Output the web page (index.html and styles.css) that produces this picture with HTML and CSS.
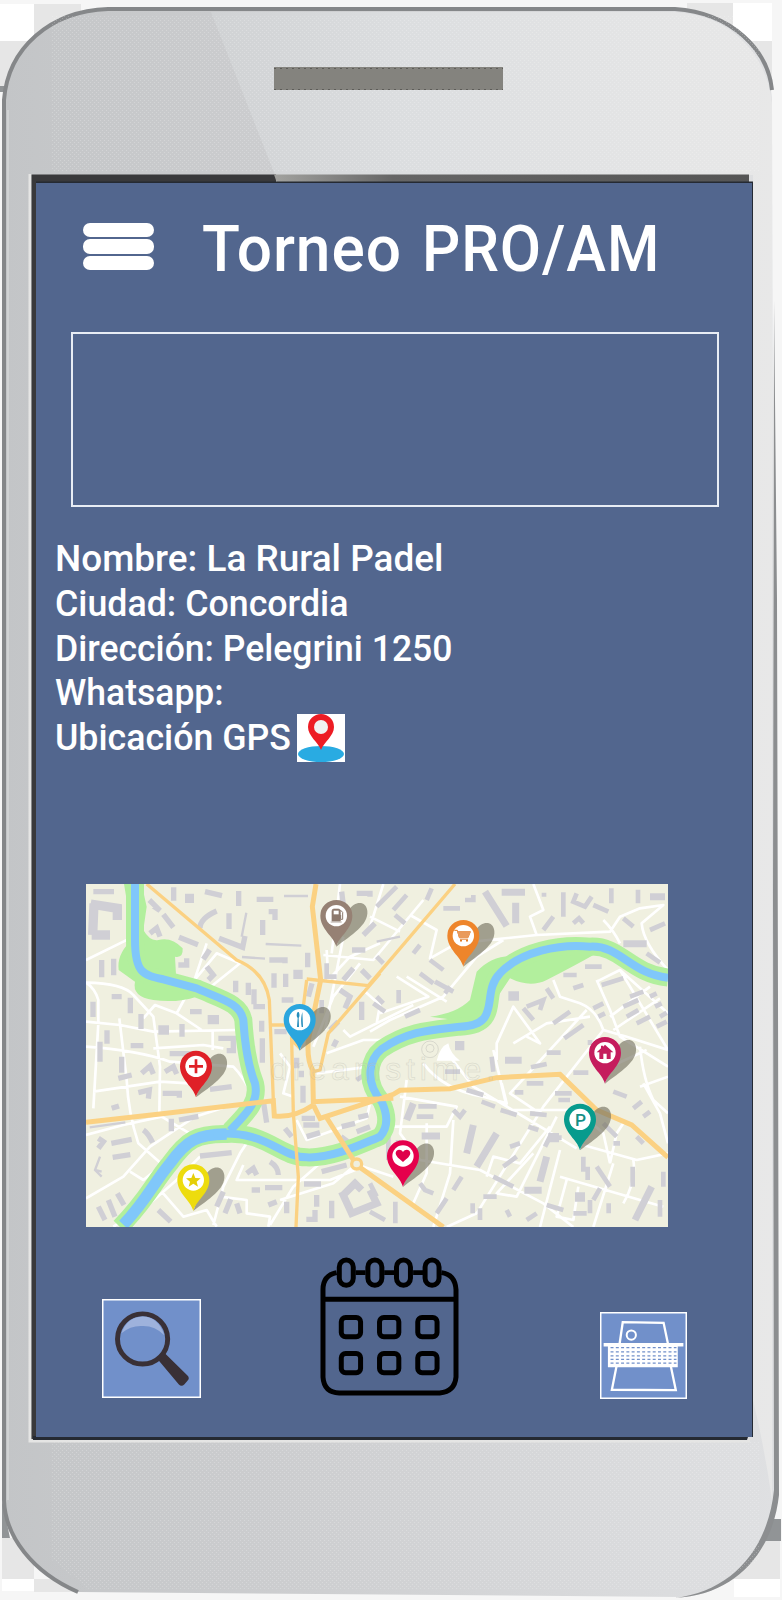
FILE: index.html
```html
<!DOCTYPE html>
<html lang="es">
<head>
<meta charset="utf-8">
<title>Torneo PRO/AM</title>
<link rel="stylesheet" href="styles.css">
</head>
<body>
<div class="phone">
<svg class="phone-shell" viewBox="0 0 782 1600" aria-hidden="true">
<defs>
<linearGradient id="body"><stop offset="0" stop-color="#c3c5c7"/><stop offset=".35" stop-color="#cccdcf"/><stop offset=".65" stop-color="#d5d6d8"/><stop offset="1" stop-color="#dfe0e2"/></linearGradient>
<linearGradient id="shine"><stop offset="0" stop-color="#d0d2d4"/><stop offset=".35" stop-color="#dcdee0"/><stop offset="1" stop-color="#e8e8e8"/></linearGradient>
<linearGradient id="edge"><stop offset="0" stop-color="#a2a29f"/><stop offset=".25" stop-color="#666"/><stop offset="1" stop-color="#555"/></linearGradient>
<pattern id="grain" width="4" height="4" patternUnits="userSpaceOnUse"><path d="M0 0h1v1H0zM2 2h1v1H2z" fill="#fff" opacity=".22"/></pattern>
</defs>
<path fill="#f6f6f6" d="M0 0H782V1600H0z"/>
<path fill="#e6e6e6" d="M34 4h47v37H34zM0 41h34v47H0zM687 3h46v38H687zM733 41h39v47H733zM2 1538h32v41H2zM34 1579h47v13H34zM733 1538h47v41H733z"/>
<path fill="#fff" d="M0 4h34v37H0zM733 3h39v38H733zM2 1579h32v12H2zM734 1579h46v18H734z"/>
<path fill="#919496" d="M0 86h4v6H0zM2 1500l8 38H2zM781 1519h-12l-7 22h19z"/>
<path d="M4 100C8 48 50 11 108 9H675C735 13 770 55 772 100L775 1490C770 1550 735 1595 680 1597L78 1592C32 1572 5 1536 4 1500Z" fill="url(#body)"/>
<path d="M211 12H675C733 15 768 57 772 104V1500Q765 1450 753 1400V175H275Z" fill="url(#shine)"/>
<path d="M78 1592C32 1572 5 1536 4 1500V100C8 48 50 11 108 9H675C732 13 768 50 772 90" fill="none" stroke="#858789" stroke-width="4"/>
<path d="M774 300L777 600 778 1000 779 1495C773 1550 738 1595 675 1598 733 1591 768 1548 774 1490L773 900Z" fill="#8c8e90"/>
<path d="M52 15H760V172H52zM52 1442H760V1560L700 1590H90L52 1560z" fill="url(#grain)"/>
<path d="M8 110V1500" stroke="#d6d7d8" stroke-width="1.5"/>
<path d="M274 67H503V90H274z" fill="#84837e"/>
<path d="M274 68.500H503M274 89.500H503" stroke="#5e5d59" stroke-dasharray="2 4"/>
<path d="M30 174V1441H750" fill="none" stroke="#e5e5e4" stroke-width="3"/>
<path d="M31.500 174.500H276V183H36V1439H31.500z" fill="#39393b"/>
<path d="M274 174.500H749V183H277z" fill="url(#edge)"/>
<path d="M36 181.500H753V1437H748L747 1440H33V1436H36z" fill="#252a33"/>
</svg>
<main class="screen">
<header class="header">
<div class="menu"><i></i><i></i><i></i></div>
<h1><span class="word-a">Torneo</span> <span class="word-b">PRO/AM</span></h1>
</header>
<div class="banner"></div>
<section class="info">
<p class="l1">Nombre: La Rural Padel</p>
<p class="l2">Ciudad: Concordia</p>
<p class="l3">Dirección: Pelegrini 1250</p>
<p class="l4">Whatsapp:</p>
<div class="gps"><p class="l5">Ubicación GPS</p>
<svg width="48" height="48" viewBox="0 0 48 48"><path fill="#fff" d="M0 0H48V48H0z"/><ellipse cx="24" cy="40" rx="23" ry="8" fill="#29abe2"/><path d="M24 36C21 28 11 22 11 13A13 13 0 0 1 37 13C37 22 27 28 24 36Z" fill="#ed1c24"/><circle cx="24" cy="13" r="7" fill="#f1f1f1"/></svg></div>
</section>
<svg class="map" viewBox="18 12 1746 1029">
<defs>
<path id="drop" d="M0 140C-8 108-48 88-48 47A48 47 0 0 1 48 47C48 88 8 108 0 140Z"/>
<path id="shade" d="M0 140L38 30C55 2 90 2 93 33C97 75 45 105 0 140Z" fill="#777363" opacity=".65"/>
</defs>
<path fill="#f0f0e0" d="M18 12H1764V1041H18z"/>
<g fill="none" stroke="#fff" stroke-width="8" stroke-linejoin="round">
<path d="M18 240L150 175M18 308Q45 325 55 360V430L40 685M18 308Q130 310 160 345L220 410L240 560L238 705M18 425L120 435L220 455L470 450M18 500Q170 510 270 545L460 560Q490 590 525 660M118 415L140 600Q145 700 175 790L265 870M40 635L240 605 330 610M190 415L225 375 290 400 320 345M290 400L365 450M398 455V510M220 505L370 495L430 505M340 310L380 190M335 310L410 220L480 250 430 290 380 330M18 765L130 735L245 710L345 770M18 955L130 890 210 800 345 710 440 680M100 1040L210 970 290 900 360 830M150 875L190 900 240 860M245 935L310 1010 380 990 410 1040M400 1035L430 920 480 820 500 790M420 950L500 960 500 1000 570 1010 565 1040M490 855L470 900H750L850 860 940 890M600 960L760 910 820 860M570 1035L640 920 720 850M650 720L680 780 860 715 870 670M600 520L630 560 610 640 640 650M710 580L870 560M740 520L850 480H905L870 540M730 225L880 240 1030 60M740 210L745 300 810 230 900 190M780 12L755 220M790 170L735 450M700 500L760 350 840 250M790 450L810 470 1000 375M850 330L900 375 890 430"/>
<path d="M870 140L910 12M870 110L960 155M990 105L1070 150 1050 235 1130 190M1130 190Q1230 180 1370 165L1350 110 1390 90 1360 12M1370 165L1590 155 1620 110 1680 85 1750 75 1685 130Q1690 190 1764 270M1570 120Q1600 150 1620 190M870 455L930 420 1090 350 1190 230 1270 180M950 290L1045 350 900 400M980 290L1100 365M1250 540V490L1300 380 1380 490 1340 470M1300 490L1400 430 1530 410M1420 300L1440 350 1500 370Q1550 390 1570 450L1640 470 1764 510M1550 300L1590 390 1620 470 1764 560M1550 305L1620 270 1764 400M1620 270L1764 510M1710 320L1590 410M1740 355L1600 450M1690 610L1740 700 1764 790M1520 390L1290 640 1380 700M1570 450L1390 680 1190 1000 1100 1041M1570 570L1700 510M1110 530L1180 620 1490 805M1030 550Q1090 630 1210 650L1280 670 1265 610M1240 510L1280 680M980 600L960 760 1020 840 1200 870 1390 970 1480 1041M960 650L1130 680 1100 740H900M1120 720L1110 880 1060 1041M1040 730V880L1000 970M1300 690H1490L1570 760 1590 850M1410 740L1320 850 1240 830 1220 890M1360 820L1250 940 1310 950 1430 710M1490 790L1670 840 1764 820M1440 810L1380 1041M1440 890L1750 980M1460 900L1430 1010 1480 1020 1495 920M1600 850L1540 1041M1660 840Q1670 900 1630 970M1590 850L1610 760 1630 730M1680 620L1764 590M1680 500Q1690 600 1720 660L1764 700"/>
</g>
<g fill="none" stroke="#d0cfd5" stroke-width="16">
<path d="M40 35H102M281 22V62M476 33V78M375 35L426 47M530 58H580M566 95H585V120M250 103L280 142M208 60L240 92 220 78M360 145Q360 115 410 93M447 100V147M548 120V165M417 175L488 202 495 168M210 160L230 144 240 170M297 172L354 194M370 238L389 209M320 235V255H295M568 240H615V250M65 240V292M101 236V286M683 218V262M380 260L400 285 385 300M467 302V337M505 308V345M582 280V323M617 281V321M522 328V373M60 485V545M39 365V411M95 350H125M151 353V400M183 402V447M81 451V491M306 432V470M330 395H365M415 475H460V512H440M152 497H190M125 530V578M269 521H338M185 580L210 558 220 582M255 575L280 560 290 582M547 475V548M390 628L455 620M115 595L155 585M175 638L208 630 205 656M248 640H298V653M95 685L117 678M297 720L355 709M55 775L70 785 55 805M94 790L155 778M190 750Q205 760 218 788M98 832L151 824M274 716V754M550 663L560 728M360 828L455 818M500 880L520 865 530 885M570 845Q595 860 595 885M515 930H540M555 923H607M672 912H723M620 965V1000M470 970L480 1000M430 935L410 980M452 958L435 1000M55 980L75 1020M85 960L105 1010M112 940L132 975M235 990L272 1025M565 975L590 965M679 1018H705V990M710 945V980M755 962V1015M669 617V668M696 310L685 350M650 533V565M664 572V592M605 360H640M555 380H520M545 422V455M620 455H583M615 745L635 770M665 715H705M670 735H718M680 770L720 758M725 875L800 855M785 740L825 730M783 770L810 790M830 755L870 740M835 712L865 705M795 385L810 350 780 330M750 450L775 425M770 480L760 500M790 300L820 265M816 210H856M850 165L885 130M830 40H870V50M785 35L790 75M780 95L800 110M845 270L870 295M845 365V420"/>
<path stroke-width="7" d="M612 48H684M499 98L485 170M557 192L664 197M486 231L555 236M29 742L136 727M45 870L65 875M60 830L45 870 65 890M890 185L960 170"/>
<path stroke-width="14" d="M740 250V290H770M725 360V400M830 600L860 580M890 80L950 20M940 90L980 45M1040 60L1055 25M945 105L975 130M1090 85H1140M1155 60H1180V45M1450 37V110M1392 38V50M1540 75L1585 95M1535 50L1515 80 1480 65 1490 40M1594 25V70M1674 29V70M1480 130L1497 115 1510 130M1390 150L1420 110M1630 115L1660 140M1710 150L1755 130M1700 220L1740 248M1000 220L1020 195M1050 240L1090 270M1120 335L1065 305M890 230L910 250M890 350L910 370M880 370L915 395M956 330V370M975 410L1020 390M1020 280L1060 310M1095 340L1110 320M1515 260H1565M1450 285H1490M1480 325L1510 315M1400 325L1420 355M1340 380L1390 360 1380 390M1330 385L1360 420M1420 430L1470 395M1453 475L1510 435M1565 315L1630 295M1540 385L1570 370M1555 410L1575 400M1650 350L1690 335M1630 380L1675 360M1640 410L1675 390M1670 430L1710 410M1710 350L1730 340M1725 380L1745 370M1740 410L1760 398M1730 440L1760 425M1530 480V495M1400 518H1435V525M1353 562L1400 552M1235 530L1240 575M1128 497H1152M1095 575H1140M1480 578H1525M1425 640H1475M1340 610H1390M1304 637H1330M1160 630L1210 645M1205 665L1245 680M1262 690L1310 705M1435 660H1470M1350 700L1400 705M1345 740L1375 750M1640 650L1600 635M1660 685L1685 665M1690 710L1710 695M1015 679H1070M1010 710H1060M1120 690L1140 710 1155 690M925 770V840M954 780V820M1145 890L1120 930M1100 955L1070 1000M1020 910L1035 930 1060 940M1240 890L1300 920M1270 860L1310 830M1290 800L1320 790M1395 800L1415 760M1430 773H1445M1510 830V875M1550 860L1590 920M1523 860V900M1658 860V920M1570 730L1610 770M1600 790H1620M1670 770L1690 790M1530 960V1000M1586 970V1000M1560 925L1540 960M1480 1000H1520M1750 875V920M1740 960V1010M1210 950H1250M1200 985V1020M1178 970V1000M1280 990L1290 1010M1340 1020L1370 1000M1400 975L1450 990M946 965V1030M870 910L890 950M870 995L915 1020"/>
<path stroke-width="21" d="M1215 35L1280 138M1265 37H1335M1307 68V130M1710 50H1755M1630 191H1700M1275 541H1325M1000 670L980 720M1180 735L1160 820M1250 760L1190 860M1025 768H1080M1400 830L1380 905M1333 931H1385M1715 920L1665 1020"/>
<path d="M42 70L38 165M32 72L112 85V120M35 165H90M383 419H417M235 450H267M315 55H342M640 283H668M1285 348H1317M1125 497H1153M1405 773H1437M1485 951H1515" stroke-width="28"/>
<path d="M785 950L825 910 845 930M785 935L815 1000 890 970 870 930" stroke-width="22"/>
</g>
<g stroke-linejoin="round">
<path fill="#b2ef9d" d="M132 12H185L200 80 190 150Q210 185 235 180 275 170 308 205 310 235 285 230L288 285 370 315 350 350Q290 370 220 360 155 350 165 305L116 270Q110 225 150 185L145 90Z"/>
<path fill="#b2ef9d" d="M1050 410Q1130 400 1170 360L1190 275Q1240 220 1315 230L1470 200 1550 220Q1470 265 1400 300 1350 325 1290 295L1200 430Z"/>
<path d="M165 12V180C165 280 190 285 250 298L350 325C430 360 480 370 490 420C495 500 505 560 525 610C538 665 500 700 450 752M120 1041C200 960 220 910 270 850C320 780 350 760 440 762C560 755 600 832 680 832C760 835 850 790 900 770Q935 730 905 665C850 600 870 535 905 507C990 450 1060 450 1140 440C1270 435 1200 340 1260 280C1320 215 1440 190 1530 200C1620 195 1650 280 1764 293" fill="none" stroke="#b2ef9d" stroke-width="54"/>
<path d="M165 12V180C165 280 190 285 250 298L350 325C430 360 480 370 490 420C495 500 505 560 525 610C538 665 500 700 450 752" fill="none" stroke="#80c7fa" stroke-width="24"/>
<path d="M130 1034C200 960 220 910 270 850C320 780 350 764 440 762" fill="none" stroke="#80c7fa" stroke-width="34"/>
<path d="M400 762C560 748 600 832 680 832C760 835 850 790 900 770Q935 730 905 665C850 600 870 535 905 507C990 450 1060 450 1140 440C1270 435 1200 340 1260 280C1320 215 1440 190 1530 200C1620 195 1650 280 1764 293" fill="none" stroke="#80c7fa" stroke-width="24"/>
</g>
<g fill="none" stroke="#fbd182" stroke-width="10">
<path d="M200 12L470 240Q555 275 568 360L580 660M575 435H670M680 300L655 500 635 480 640 700 655 890 648 1041M680 297L865 317M900 280L745 460 720 570 700 575M1125 12L865 317"/>
<path stroke-width="15" d="M708 12L697 80 722 300 685 480Q680 540 698 570L700 665 940 655M18 727L240 702 580 662 583 708Q640 715 700 675L720 715 940 643 960 631 1110 626 1250 593 1440 583 1550 690 1655 735 1764 832M735 705L830 855 1090 1041"/>
</g>
<circle cx="830" cy="852" r="15" fill="#efefdf" stroke="#fbd182" stroke-width="10"/>
<path d="M1070 542Q1080 500 1105 490 1110 520 1140 542Z" fill="#fff"/>
<text class="watermark" x="570" y="600" textLength="675">dreamstime.</text>
<g fill="none" stroke="#ccccc2" stroke-width="2"><circle cx="1050" cy="508" r="25"/><circle cx="1050" cy="505" r="12"/></g>
<g transform="translate(769 60)"><use href="#shade"/><use href="#drop" fill="#968174"/><circle cy="47" r="32" fill="#fff"/><path d="M-13 63V33Q-13 27-7 27H6Q12 27 12 33V63ZM-17 66H16" fill="#8d796d" stroke="#8d796d" stroke-width="2"/><path d="M12 30L19 37V58H13V45" fill="none" stroke="#8d796d" stroke-width="3"/><path d="M-8 32H7V43H-8z" fill="#fff"/></g>
<g transform="translate(659 372)"><use href="#shade"/><use href="#drop" fill="#2ba6de"/><circle cy="47" r="32" fill="#fff"/><path d="M-6 24Q-12 34-6 42L-8 69H-2L-3 42Q2 34-3 24M8 24Q2 45 6 69H10Z" fill="#268dbc"/></g>
<g transform="translate(348 512)"><use href="#shade"/><use href="#drop" fill="#df2027"/><circle cy="47" r="32" fill="#fff"/><path d="M-21 47H21M0 26V68" stroke="#df2027" stroke-width="8"/></g>
<g transform="translate(340 853)"><use href="#shade"/><use href="#drop" fill="#eddc0e"/><circle cy="47" r="32" fill="#fff"/><path d="M0 26L6 41 22 42 10 52 14 67 0 58-14 67-10 52-22 42-6 41Z" fill="#e5cf08"/></g>
<g transform="translate(1150 120)"><use href="#shade"/><use href="#drop" fill="#ee852b"/><circle cy="47" r="32" fill="#fff"/><path d="M-27 31H-18L-12 53H14L21 35H-17" fill="none" stroke="#e47c25" stroke-width="3"/><path d="M-17 35H20L13 53H-11zM-10 58H14" fill="#e99a5c" stroke="#e99a5c" stroke-width="3"/><path d="M-10 62H-4M8 62H14" stroke="#e47c25" stroke-width="5"/></g>
<g transform="translate(1575 471)"><use href="#shade"/><use href="#drop" fill="#c51c5d"/><circle cy="47" r="32" fill="#fff"/><path d="M0 23L25 46H17V66H5V50H-5V66H-17V46H-25L-12 34V26H-6V29Z" fill="#c51c5d"/></g>
<g transform="translate(1500 671)"><use href="#shade"/><use href="#drop" fill="#079b8d"/><circle cy="47" r="32" fill="#fff"/><text class="parking" x="-15" y="66">P</text></g>
<g transform="translate(969 781)"><use href="#shade"/><use href="#drop" fill="#e5004c"/><circle cy="47" r="32" fill="#fff"/><path d="M0 65C-14 53-22 47-22 38C-20 26-6 26 0 35C6 26 20 26 22 38C22 47 14 53 0 65Z" fill="#df004a"/></g>
</svg>
<nav class="nav">
<svg class="search" viewBox="0 0 300 300"><path d="M2 2H298V298H2z" fill="#7190ca" stroke="#fff" stroke-width="5"/><path d="M168 182L192 166 259 232Q267 240 259 248L250 258Q241 267 233 259Z" fill="#393036"/><circle cx="123" cy="121" r="76" fill="#7190ca" stroke="#393036" stroke-width="15"/><path d="M59 104Q75 55 123 53 171 54 189 110 160 81 123 82 87 80 59 104Z" fill="#9eb2dc"/></svg>
<svg class="calendar" viewBox="0 0 418 418" fill="none" stroke="#000" stroke-width="15"><path d="M50 47Q9 55 9 98V361Q12 407 58 409H360Q405 405 409 361V98Q406 52 365 47M107 47H137M193 47H223M280 47H310M9 127H409"/><rect x="58" y="9" width="42" height="76" rx="21"/><rect x="144" y="9" width="42" height="76" rx="21"/><rect x="230" y="9" width="42" height="76" rx="21"/><rect x="316" y="9" width="42" height="76" rx="21"/><g><rect x="64" y="182" width="58" height="58" rx="13"/><rect x="179" y="182" width="58" height="58" rx="13"/><rect x="294" y="182" width="58" height="58" rx="13"/><rect x="64" y="290" width="58" height="58" rx="13"/><rect x="179" y="290" width="58" height="58" rx="13"/><rect x="294" y="290" width="58" height="58" rx="13"/></g></svg>
<svg class="court" viewBox="0 0 264 264"><path d="M2 2H262V262H2z" fill="#7190ca" stroke="#fff" stroke-width="5"/><path d="M59 100L69 31 193 33 207 100M51 160L36 236 230 237 214 160" fill="none" stroke="#fff" stroke-width="7"/><circle cx="95" cy="70" r="14" fill="none" stroke="#fff" stroke-width="6"/><path d="M11 94H253V105H236V168H24V105H11z" fill="#fff"/><path d="M32 108H232M32 121H232M32 133H232M32 144H232M32 155H232" stroke="#7190ca" stroke-width="4" stroke-dasharray="9 7"/></svg>
</nav>
</main>
</div>
</body>
</html>
```
FILE: styles.css
```css
* { box-sizing: border-box; }
body { margin: 0; }
.phone { position: relative; width: 782px; height: 1600px; padding: 183px 30px 163px 36px; overflow: hidden; }
.phone-shell { position: absolute; inset: 0; width: 782px; height: 1600px; }
.screen { position: relative; width: 716px; height: 1254px; background: #52668e; color: #fff; font-family: Roboto, "Open Sans", sans-serif; }
.header { display: flex; height: 149px; padding: 40px 0 0 47px; }
.menu { display: flex; flex-direction: column; gap: 2px; width: 71px; }
.menu i { height: 14.3px; border-radius: 7px; background: #fff; }
h1 { display: flex; margin: -12px 0 0 48px; font-size: 65px; font-weight: 500; line-height: 76px; letter-spacing: 1px; white-space: nowrap; }
.word-a { width: 220px; transform: scaleX(.957); transform-origin: left; }
.word-b { transform: scaleX(.922); transform-origin: left; }
.banner { width: 648px; height: 175px; margin-left: 35px; border: 2px solid #e8edf5; }
.info { height: 377px; padding: 30px 0 0 19px; font-size: 37px; line-height: 44.8px; font-weight: 500; }
.info p { width: max-content; margin: 0; white-space: nowrap; transform-origin: left; }
.l1 { transform: scaleX(.998); }
.l2 { transform: scaleX(.966); }
.l3 { transform: scaleX(.96); }
.l4 { transform: scaleX(.96); }
.l5 { transform: scaleX(.965); }
.gps { display: flex; position: relative; }
.gps svg { position: absolute; left: 241.5px; top: -2px; }
.map { display: block; width: 582px; height: 343px; margin-left: 50px; }
.watermark { font: 96px "Liberation Sans", sans-serif; fill: none; stroke: #bcbcb2; stroke-width: 1.5; opacity: .5; }
.parking { font: 500 52px Roboto, sans-serif; fill: #168f86; }
.nav { display: flex; align-items: flex-start; padding: 30px 0 0 66px; }
.search { width: 99px; height: 99px; margin-top: 42px; }
.calendar { width: 139px; height: 139px; margin-left: 119px; }
.court { width: 87px; height: 87px; margin: 55px 0 0 141px; }
```
